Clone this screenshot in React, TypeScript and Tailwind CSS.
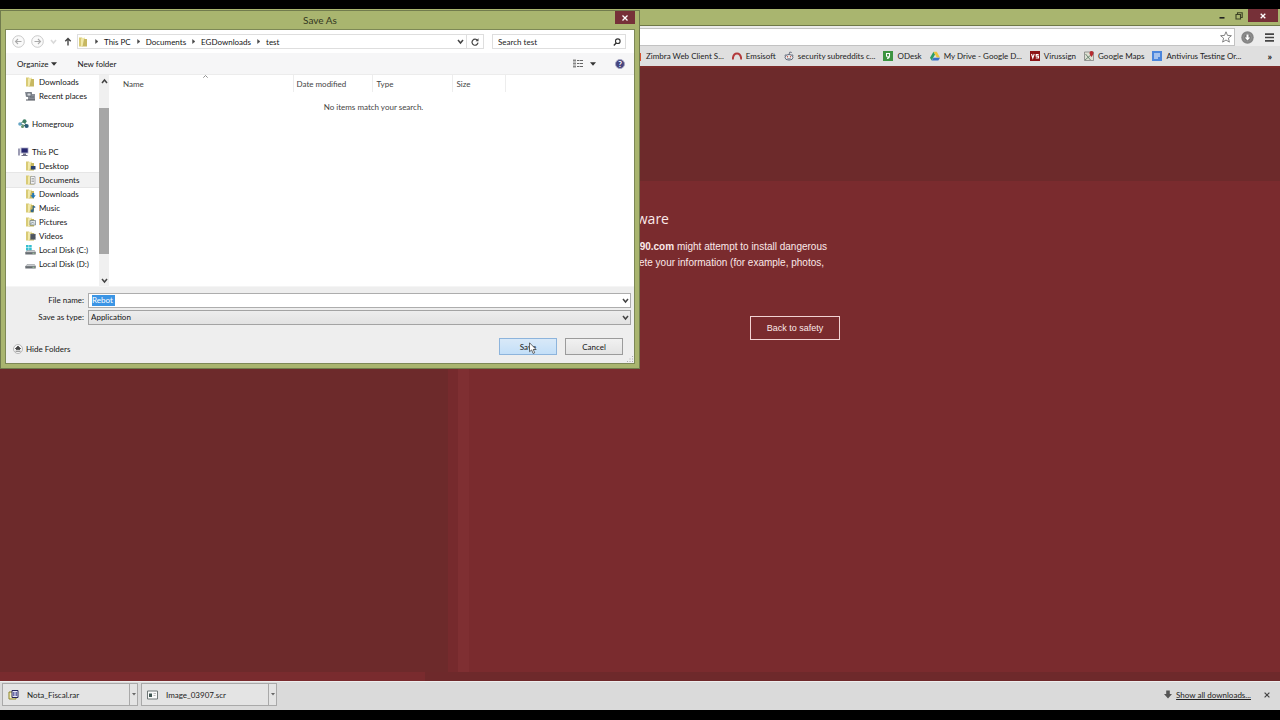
import type { ReactNode } from "react";

type Kind = "folder" | "recent" | "home" | "pc" | "desktop" | "doc" | "down" | "music" | "pic" | "video" | "diskc" | "diskd";

function ItemIcon({ kind }: { kind: Kind }) {
  if (kind === "recent")
    return (
      <svg viewBox="0 0 11 10" className="h-[10px] w-[11px] shrink-0">
        <path d="M0 1h7v2h3v6H3V6H1z" fill="#8b8f98" />
        <path d="M2 2h4v3H2zM5 6h4" fill="#d5d8de" stroke="#555b66" strokeWidth=".7" />
        <path d="M1 9h9" stroke="#4c5159" />
      </svg>
    );
  if (kind === "home")
    return (
      <svg viewBox="0 0 11 10" className="h-[10px] w-[11px] shrink-0">
        <path d="M2 5l4-3 2 5z" fill="none" stroke="#4a7d62" />
        <circle cx="6.500" cy="2.200" r="2" fill="#3f7f65" />
        <circle cx="2" cy="5" r="1.800" fill="#65a5c4" />
        <circle cx="8.600" cy="7" r="2.100" fill="#285c78" />
        <circle cx="4.500" cy="7.500" r="1.500" fill="#61936b" />
      </svg>
    );
  if (kind === "pc")
    return (
      <svg viewBox="0 0 11 10" className="h-[10px] w-[11px] shrink-0">
        <path d="M0 1.500h2v7H0z" fill="#9c9cb4" />
        <path d="M2.500.5h8v6h-8z" fill="#b9b9d0" />
        <path d="M3.500 1.300h6.200v4.300H3.500z" fill="#28286f" />
        <path d="M5 6.500h3v1.500h1.500v1H3.500v-1H5z" fill="#707087" />
      </svg>
    );
  if (kind === "diskc" || kind === "diskd")
    return (
      <svg viewBox="0 0 11 10" className="h-[10px] w-[11px] shrink-0">
        {kind === "diskc" && (
          <path d="M1 0h2.600v2.600H1zM4.100 0h2.600v2.600H4.100zM1 3h2.600v2.600H1zM4.100 3h2.600v2.600H4.100z" fill="#35bfd0" />
        )}
        <path d="M2 5.500h7.500l1.200 2H.5z" fill="#c9cccf" stroke="#85898d" strokeWidth=".5" />
        <path d="M.3 7.200h10.400V9.500H.3z" fill="#686d72" />
        <path d="M7.500 8.300h2" stroke="#b8f0b0" strokeWidth=".7" />
      </svg>
    );
  return (
    <svg viewBox="0 0 11 10" className="h-[10px] w-[11px] shrink-0">
      <path d="M1 .5h3l1 1v8H1z" fill="#d9cb76" />
      <path d="M3 1.500l4-1v8.500H3z" fill="#f1e9ac" />
      <path d="M6 2h3v7.500H4.500z" fill="#c7b862" />
      {kind === "desktop" && <path d="M6 5h4.500v3.500H6z" fill="#27406f" />}
      {kind === "doc" && <path d="M5.500 1.500h4.500V9H5.500zM6.500 3.500h2.500M6.500 5h2.500M6.500 6.500h2.500" fill="#f3f3f3" stroke="#7c7f85" strokeWidth=".6" />}
      {kind === "down" && <path d="M7.200 4h2v2.200h1.500L8.200 9.500 5.500 6.200h1.700z" fill="#2377b5" />}
      {kind === "music" && (
        <>
          <path d="M8.200 3v4.500M8.200 3l2 1.500" stroke="#33678a" strokeWidth="1.200" />
          <circle cx="7.200" cy="7.800" r="1.500" fill="#33678a" />
        </>
      )}
      {kind === "pic" && <path d="M5 3.500h5.500v4.500H5zM5.500 7l2-2 1.500 1.500" fill="#dfe6ea" stroke="#6e7b82" strokeWidth=".7" />}
      {kind === "video" && <path d="M5.500 3h5v5.500h-5z" fill="#4e5560" stroke="#858b94" strokeWidth=".6" strokeDasharray="1 .6" />}
    </svg>
  );
}

const groups: { head?: { label: string; kind: Kind }; items: { label: string; kind: Kind; on?: boolean }[] }[] = [
  { items: [{ label: "Downloads", kind: "folder" }, { label: "Recent places", kind: "recent" }] },
  { head: { label: "Homegroup", kind: "home" }, items: [] },
  {
    head: { label: "This PC", kind: "pc" },
    items: [
      { label: "Desktop", kind: "desktop" },
      { label: "Documents", kind: "doc", on: true },
      { label: "Downloads", kind: "down" },
      { label: "Music", kind: "music" },
      { label: "Pictures", kind: "pic" },
      { label: "Videos", kind: "video" },
      { label: "Local Disk (C:)", kind: "diskc" },
      { label: "Local Disk (D:)", kind: "diskd" },
    ],
  },
];

function Chevron({ dir = "down", className = "" }: { dir?: "down" | "up" | "right"; className?: string }) {
  const d = dir === "down" ? "M1 2l2.500 3L6 2" : dir === "up" ? "M1 5l2.500-3L6 5" : "M2.500 1.500L5 3.500 2.500 5.500z";
  return (
    <svg viewBox="0 0 7 7" className={`h-[7px] w-[7px] shrink-0 ${className}`}>
      <path d={d} fill={dir === "right" ? "#444" : "none"} stroke="#444" strokeWidth={dir === "right" ? 0.4 : 1.5} />
    </svg>
  );
}

function NavArrow({ flip = false }: { flip?: boolean }) {
  return (
    <svg viewBox="0 0 13 13" className="h-[13px] w-[13px]">
      <circle cx="6.500" cy="6.500" r="5.800" fill="#fafafa" stroke="#c4c4c4" strokeWidth=".9" />
      <path d={flip ? "M3.500 6.500h6M7 4l2.500 2.500L7 9" : "M9.500 6.500h-6M6 4L3.500 6.500 6 9"} fill="none" stroke="#aaa" strokeWidth="1.100" />
    </svg>
  );
}

function SaveDialog() {
  return (
    <section
      role="dialog"
      aria-label="Save As"
      className="absolute top-[10px] left-0 flex w-[640px] flex-col border border-[#717b4d] bg-[#a9b56f] pr-1 pb-1 pl-1 text-[#151515]"
    >
      <header className="relative flex h-[18px] shrink-0 items-center justify-center text-[10px] leading-none text-[#33371f]">
        <h1>Save As</h1>
        <button aria-label="Close dialog" className="absolute top-0 right-0 flex h-[13px] w-5 items-center justify-center bg-[#763038]">
          <svg viewBox="0 0 6 6" className="h-[6px] w-[6px]">
            <path d="M.5.500l5 5M5.500.500l-5 5" stroke="#fff" strokeWidth="1.300" />
          </svg>
        </button>
      </header>
      <div className="flex flex-col border border-[#7d8856] bg-white">
        <div className="flex h-[23px] items-center pr-2 pl-[6px]">
          <button aria-label="Back"><NavArrow /></button>
          <button aria-label="Forward" className="ml-[6px]"><NavArrow flip /></button>
          <Chevron className="ml-[6px] opacity-20" />
          <button aria-label="Up" className="ml-[7px]">
            <svg viewBox="0 0 8 9" className="h-[9px] w-2">
              <path d="M4 8.500V1.500M1.300 4.200L4 1.500l2.700 2.700" fill="none" stroke="#444" strokeWidth="1.400" />
            </svg>
          </button>
          <div className="ml-[5px] flex h-[15px] grow items-center border border-[#dedede]">
            <ItemIcon kind="folder" />
            {["This PC", "Documents", "EGDownloads", "test"].map((t) => (
              <span key={t} className="flex items-center">
                <Chevron dir="right" className="mx-1" />
                {t}
              </span>
            ))}
            <button aria-label="Recent locations" className="mr-[2px] ml-auto"><Chevron /></button>
            <button aria-label="Refresh" className="flex h-[13px] w-[17px] items-center justify-center border-l border-[#dedede]">
              <svg viewBox="0 0 8 8" className="h-2 w-2">
                <path d="M6.500 2.500A3 3 0 1 0 7 4.700" fill="none" stroke="#444" strokeWidth="1.200" />
                <path d="M4.500 3.200h3V.3z" fill="#444" />
              </svg>
            </button>
          </div>
          <label className="ml-2 flex h-[15px] w-[134px] items-center border border-[#dedede] pr-1 pl-[5px]">
            <input aria-label="Search test" placeholder="Search test" className="w-0 grow bg-transparent outline-none placeholder:text-[#222] placeholder:opacity-100" />
            <svg viewBox="0 0 8 8" className="h-2 w-2">
              <circle cx="4.800" cy="3.200" r="2.300" fill="none" stroke="#333" strokeWidth="1.100" />
              <path d="M3.200 5L.8 7.400" stroke="#333" strokeWidth="1.400" />
            </svg>
          </label>
        </div>
        <div className="flex h-[22px] items-center border-b border-[#ececec] bg-[#f6f6f7] pr-[9px] pl-[11px]">
          <button className="flex items-center gap-[3px]">
            Organize
            <svg viewBox="0 0 6 4" className="h-1 w-[6px]"><path d="M0 .3h6L3 3.700z" fill="#333" /></svg>
          </button>
          <button className="ml-5">New folder</button>
          <button aria-label="Change view" className="ml-auto flex items-center gap-[7px]">
            <svg viewBox="0 0 10 9" className="h-[9px] w-[10px]">
              <path d="M0 1.500h3M0 4.500h3M0 7.500h3" stroke="#888" strokeWidth="1.800" />
              <path d="M4 1.500h2.500M7 1.500h3M4 4.500h2.500M7 4.500h3M4 7.500h2.500M7 7.500h3" stroke="#666" />
            </svg>
            <svg viewBox="0 0 6 4" className="h-1 w-[6px]"><path d="M0 .3h6L3 3.700z" fill="#333" /></svg>
          </button>
          <button aria-label="Help" className="ml-[19px] flex h-[10px] w-[10px] items-center justify-center rounded-full border border-[#a4a4c0] bg-[#45457f] text-[8px] leading-none font-bold text-white">?</button>
        </div>
        <div className="flex h-[211px]">
          <nav aria-label="Folders" className="flex w-[93px] shrink-0 flex-col gap-[14px] overflow-hidden">
            {groups.map((g, i) => (
              <ul key={i}>
                {g.head && (
                  <li className="flex h-[14px] items-center gap-[3px] pl-3">
                    <ItemIcon kind={g.head.kind} />
                    {g.head.label}
                  </li>
                )}
                {g.items.map((it) => (
                  <li key={it.label} className={`flex h-[14px] items-center gap-[3px] pl-[19px] whitespace-nowrap ${it.on ? "bg-[#f2f2f2] outline outline-[#e6e6e6]" : ""}`}>
                    <ItemIcon kind={it.kind} />
                    {it.label}
                  </li>
                ))}
              </ul>
            ))}
          </nav>
          <div className="flex w-[10px] shrink-0 flex-col items-center bg-[#f0f0f0] pt-[3px] pb-[2px]">
            <Chevron dir="up" />
            <div className="mt-[23px] h-[146px] w-full bg-[#a6a6a6]" />
            <Chevron className="mt-auto" />
          </div>
          <div className="grow">
            <table className="w-[397px] table-fixed text-left text-[#444]">
              <thead>
                <tr className="h-[17px]">
                  <th className="relative w-[184px] pl-[14px] font-normal">
                    Name
                    <svg viewBox="0 0 5 3" className="absolute top-0 left-[94px] h-[3px] w-[5px]"><path d="M.3 2.700L2.500.5l2.200 2.200" fill="none" stroke="#777" strokeWidth=".8" /></svg>
                  </th>
                  <th className="w-[79px] border-l border-[#ededed] pl-[3px] font-normal">Date modified</th>
                  <th className="w-20 border-l border-[#ededed] pl-1 font-normal">Type</th>
                  <th className="border-x border-[#ededed] pl-1 font-normal">Size</th>
                </tr>
              </thead>
            </table>
            <p className="mt-[10px] pl-1 text-center text-[#444]">No items match your search.</p>
          </div>
        </div>
        <div className="flex flex-col border-t border-[#f5f5f5] bg-[#eee]">
          <div className="mt-[5px] flex h-4 items-center pr-[3px]">
            <label htmlFor="fname" className="w-[82px] shrink-0 pr-1 text-right">File name:</label>
            <div className="flex h-[15px] grow items-center border border-[#adadad] bg-white pl-[3px]">
              <div className="flex grow">
                <input id="fname" defaultValue="Rebot" className="h-[11px] w-[23px] bg-[#3b95e5] text-white outline-none" />
              </div>
              <Chevron className="mr-[1px]" />
            </div>
          </div>
          <div className="mt-[1px] flex h-4 items-center pr-[3px]">
            <label htmlFor="ftype" className="w-[82px] shrink-0 pr-1 text-right">Save as type:</label>
            <div className="flex h-[15px] grow items-center border border-[#a3a3a3] bg-linear-to-b from-[#ededed] to-[#e2e2e2] pl-[2px]">
              <select id="ftype" className="grow appearance-none bg-transparent outline-none"><option>Application</option></select>
              <Chevron className="mr-[1px]" />
            </div>
          </div>
          <div className="mt-[13px] flex h-[17px] items-center pr-[11px] pl-[7px]">
            <button className="mt-1 flex items-center gap-[3px]">
              <svg viewBox="0 0 10 10" className="h-[10px] w-[10px]">
                <circle cx="5" cy="5" r="4.500" fill="#f6f6f6" stroke="#aaa" strokeWidth=".8" />
                <path d="M2 5l3-3 3 3M2.500 7.200h5M3 5.500l2-1.500 2 1.500z" fill="#444" stroke="#444" strokeWidth=".7" />
              </svg>
              Hide Folders
            </button>
            <button className="relative ml-auto h-[17px] w-[58px] border border-[#8db4dc] bg-linear-to-b from-[#d9e9f8] to-[#c3dff8]">
              Save
              <svg viewBox="0 0 9 14" className="absolute top-[3px] left-[29px] h-[13px] w-2">
                <path d="M.6.600v10l2.400-2 1.600 4 1.800-.8-1.600-3.700h3.200z" fill="#fff" stroke="#333" strokeWidth=".8" />
              </svg>
            </button>
            <button className="ml-2 h-[17px] w-[58px] border border-[#9b9b9b] bg-linear-to-b from-[#f1f1f1] to-[#e3e3e3]">Cancel</button>
          </div>
          <div className="flex h-2 items-end justify-end">
            <svg viewBox="0 0 7 7" className="h-[7px] w-[7px]">
              <path d="M5 0h1v1H5zM5 2.500h1v1H5zM2.500 2.500h1v1h-1zM5 5h1v1H5zM2.500 5h1v1h-1zM0 5h1v1H0z" fill="#aaa" />
            </svg>
          </div>
        </div>
      </div>
    </section>
  );
}

const bookmarks: { label: string; icon: ReactNode }[] = [
  { label: "Zimbra Web Client S...", icon: <path d="M5 2h4v8H4V6z" fill="#d5502f" /> },
  { label: "Emsisoft", icon: <path d="M.8 8.500C1 4.500 3 2.500 5 2.500s4 2 4.300 6" fill="none" stroke="#b3393b" strokeWidth="2" /> },
  {
    label: "security subreddits c...",
    icon: (
      <>
        <ellipse cx="5" cy="6.300" rx="4" ry="2.800" fill="#eee" stroke="#555e70" strokeWidth=".9" />
        <path d="M5 3.500L5.800 1l2 .5M.6 4.500l1.300-.8M9.400 4.500l-1.300-.8M3.500 7.500q1.500 1 3 0" fill="none" stroke="#555e70" strokeWidth=".8" />
        <circle cx="3.500" cy="5.800" r=".7" fill="#c54b3a" />
        <circle cx="6.500" cy="5.800" r=".7" fill="#c54b3a" />
      </>
    ),
  },
  {
    label: "ODesk",
    icon: (
      <>
        <path d="M0 0h10v10H0z" fill="#3c9440" />
        <path d="M3.500 2.500v2a1.500 1.500 0 0 0 3 0v-2zM6.500 4.500q0 3-2.500 3" fill="none" stroke="#fff" strokeWidth="1.100" />
      </>
    ),
  },
  {
    label: "My Drive - Google D...",
    icon: (
      <>
        <path d="M3.500.8L0 6.800l1.700 2.700L5 3.600z" fill="#2c9c63" />
        <path d="M3.500.8h3.200L10 6.600H6.800z" fill="#ecc43c" />
        <path d="M3.500 6.700H10L8.300 9.500H1.700z" fill="#3a70c9" />
      </>
    ),
  },
  {
    label: "Virussign",
    icon: (
      <>
        <path d="M0 0h10v10H0z" fill="#8d1417" />
        <path d="M1.500 3l1.300 4L4.200 3M8.700 3.500H6.200v1.600h2.300v1.900H5.800" fill="none" stroke="#fff" strokeWidth="1.100" />
      </>
    ),
  },
  {
    label: "Google Maps",
    icon: (
      <>
        <path d="M.5 1h9v8.500h-9z" fill="#dedfd3" stroke="#777" strokeWidth=".7" />
        <path d="M1 9l7-6M1.500 3l5 6" stroke="#5d7d68" strokeWidth=".9" />
        <path d="M5.500 2a2 2 0 1 1 4 0c0 1.500-2 4-2 4s-2-2.500-2-4z" fill="#b52b30" />
      </>
    ),
  },
  {
    label: "Antivirus Testing Or...",
    icon: (
      <>
        <path d="M0 0h10v10H0z" fill="#4c86dc" />
        <path d="M2 3h6M2 5h6M2 7h4" stroke="#fff" />
      </>
    ),
  },
];

const downloads = [
  {
    name: "Nota_Fiscal.rar",
    icon: (
      <>
        <path d="M1 2h7v7H1z" fill="#f7f1bf" stroke="#8b8227" />
        <path d="M4 .5h6v7H4z" fill="#e5e5f5" stroke="#27275c" />
        <path d="M5.500 2v4M7 2v4M8.500 2v4" stroke="#4b4b94" strokeWidth=".8" />
      </>
    ),
  },
  {
    name: "Image_03907.scr",
    icon: (
      <>
        <path d="M.5 1h10v8H.5z" fill="#fafafa" stroke="#6f7776" />
        <path d="M2 3.500h3v3.500H2z" fill="#3f5552" />
        <path d="M6.500 3.500h2.500M6.500 5.500h2" stroke="#aaa" strokeWidth=".8" />
      </>
    ),
  },
];

export default function App() {
  return (
    <div className="relative flex h-screen w-full flex-col overflow-hidden bg-black pt-[9px] pb-[10px] font-['Lato','Open_Sans',sans-serif] text-[8px] leading-[10px] text-[#222]">
      <header className="flex h-[17px] shrink-0 items-start justify-end border-b border-[#6e7847] bg-[#a9b56f]">
        <button aria-label="Minimize" className="flex h-[13px] w-[17px] items-center justify-center">
          <svg viewBox="0 0 8 8" className="h-2 w-2"><path d="M1.500 5.800h5" stroke="#222" strokeWidth="1.600" /></svg>
        </button>
        <button aria-label="Restore" className="flex h-[13px] w-[17px] items-center justify-center">
          <svg viewBox="0 0 8 8" className="h-2 w-2"><path d="M1 2.500h4.500v4.500H1zM2.500 2V.8h4.700v4.700H6" fill="none" stroke="#3b4024" strokeWidth="1.100" /></svg>
        </button>
        <button aria-label="Close window" className="mr-[2px] ml-[1px] flex h-[13px] w-[30px] items-center justify-center bg-[#763038]">
          <svg viewBox="0 0 6 6" className="h-[6px] w-[6px]"><path d="M.7.700l4.600 4.600M5.300.7L.7 5.300" stroke="#fff" strokeWidth="1.300" /></svg>
        </button>
      </header>
      <div className="flex h-5 shrink-0 items-center bg-[#ececec] pt-[2px] pr-[6px]">
        <label className="flex h-[18px] grow items-center justify-end border border-[#c2c2c2] bg-white pr-[2px]">
          <input aria-label="Address" className="w-0 grow outline-none" />
          <svg viewBox="0 0 12 12" className="h-3 w-3"><path d="M6 .8l1.500 3.600 3.900.3-3 2.500 1 3.900L6 9l-3.400 2.100 1-3.900-3-2.500 3.900-.3z" fill="#fff" stroke="#666" strokeWidth=".8" /></svg>
        </label>
        <button aria-label="Downloads" className="ml-[6px]">
          <svg viewBox="0 0 13 13" className="h-[13px] w-[13px]"><circle cx="6.500" cy="6.500" r="6.200" fill="#858585" /><circle cx="6.500" cy="6.500" r="3.900" fill="#777" stroke="#a5a5a5" strokeWidth=".6" /><path d="M5.500 3.500h2v3h1.800L6.500 9.500 3.700 6.500h1.800z" fill="#fff" /></svg>
        </button>
        <button aria-label="Menu" className="ml-[11px]">
          <svg viewBox="0 0 9 9" className="h-[9px] w-[9px]"><path d="M0 1.200h9M0 4.500h9M0 7.800h9" stroke="#444" strokeWidth="1.700" /></svg>
        </button>
      </div>
      <nav aria-label="Bookmarks" className="flex h-5 shrink-0 items-center bg-[#dfdfdf] pr-2 pl-[632px]">
        <div className="flex items-center gap-2 whitespace-nowrap">
          {bookmarks.map((b) => (
            <a key={b.label} href="#" className="flex items-center gap-1">
              <svg viewBox="0 0 10 10" className="h-[10px] w-[10px] shrink-0">{b.icon}</svg>
              {b.label}
            </a>
          ))}
        </div>
        <button aria-label="More bookmarks" className="ml-auto text-[10px] font-bold">»</button>
      </nav>
      <main className="flex grow flex-col border-t-2 border-[#7a2b2a] bg-[#6d2a2b] font-['Liberation_Sans',sans-serif] text-[10px] leading-4 text-[#fbe9e9]">
        <div className="h-[113px] shrink-0" />
        <div className="flex grow">
          <div className="w-[448px] shrink-0" />
          <div className="w-[10px] shrink-0 bg-[#762a2d]" />
          <div className="w-[11px] shrink-0 bg-[#7f2f32]" />
          <div className="flex grow flex-col items-start bg-[#7a2b2e] pt-[30px]">
            <div className="w-[371px]">
              <h2 className="w-[200px] text-right font-['Open_Sans',sans-serif] text-[14px] leading-4">malware</h2>
              <p className="mt-3 w-[358px] text-right whitespace-nowrap"><b>07390.com</b> might attempt to install dangerous</p>
              <p className="w-[355px] text-right whitespace-nowrap">delete your information (for example, photos,</p>
              <div className="mt-[45px] flex justify-end">
                <button className="h-6 w-[90px] border border-[#f2d3d3] text-[9px]">Back to safety</button>
              </div>
            </div>
          </div>
        </div>
        <div className="flex h-[9px] shrink-0">
          <div className="w-[425px] bg-[#792b2e]" />
          <div className="grow bg-[#6e292b]" />
        </div>
      </main>
      <footer className="flex h-[29px] shrink-0 items-start border-t border-[#eee] bg-[#dadada] pt-[1px] pr-[10px] pl-[2px]">
        {downloads.map((d) => (
          <div key={d.name} className="mr-[3px] flex h-[23px] w-[136px] items-center border border-[#a9a9a9] bg-[#e4e4e4]">
            <button className="flex h-full grow items-center gap-2 pl-[5px]">
              <svg viewBox="0 0 11 10" className="h-[10px] w-[11px]">{d.icon}</svg>
              {d.name}
            </button>
            <button aria-label={`Options for ${d.name}`} className="flex h-full w-2 items-center justify-center border-l border-[#a9a9a9]">
              <svg viewBox="0 0 4 3" className="h-[3px] w-1"><path d="M0 0h4L2 2.500z" fill="#666" /></svg>
            </button>
          </div>
        ))}
        <a href="#" className="ml-auto flex h-[23px] items-center gap-1">
          <svg viewBox="0 0 8 9" className="h-[9px] w-2"><path d="M2.200.5h3.600v3.500H8L4 8.500 0 4h2.200z" fill="#555" /></svg>
          <span className="underline">Show all downloads...</span>
        </a>
        <button aria-label="Close downloads" className="ml-[13px] flex h-[23px] items-center">
          <svg viewBox="0 0 6 6" className="h-[6px] w-[6px]"><path d="M.6.600l4.800 4.800M5.400.6L.6 5.400" stroke="#444" strokeWidth="1.200" /></svg>
        </button>
      </footer>
      <SaveDialog />
    </div>
  );
}
